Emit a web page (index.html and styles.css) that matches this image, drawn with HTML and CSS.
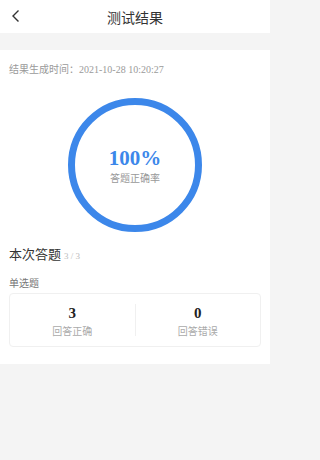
FILE: index.html
```html
<!DOCTYPE html>
<html lang="zh-CN">
<head>
<meta charset="utf-8">
<link rel="stylesheet" href="styles.css">
</head>
<body>
<div class="page">
  <header class="nav">
    <svg class="back" width="10" height="14" viewBox="0 0 10 14"><path d="M7.5 1.5 L2 7 L7.5 12.5" fill="none" stroke="#333" stroke-width="1.4"/></svg>
    <div class="title">测试结果</div>
  </header>
  <div class="band"></div>
  <main class="content">
    <div class="time">结果生成时间：<span class="num">2021-10-28 10:20:27</span></div>
    <div class="ring-wrap">
      <div class="ring">
        <div class="pct">100%</div>
        <div class="pct-label">答题正确率</div>
      </div>
    </div>
    <div class="sec-title">本次答题 <span class="count">3 / 3</span></div>
    <div class="type">单选题</div>
    <div class="card">
      <div class="cell">
        <div class="val">3</div>
        <div class="lab">回答正确</div>
      </div>
      <div class="divider"></div>
      <div class="cell">
        <div class="val">0</div>
        <div class="lab">回答错误</div>
      </div>
    </div>
  </main>
</div>
</body>
</html>
```

FILE: styles.css
```css
html, body {
  margin: 0;
  padding: 0;
  background: #f4f4f4;
}
body {
  font-family: "Noto Sans CJK SC", "Noto Sans", sans-serif;
  color: #333;
}
.page {
  width: 270px;
  min-height: 460px;
  background: #f4f4f4;
}
.nav {
  height: 33px;
  background: #fff;
  display: flex;
  align-items: center;
  justify-content: center;
  position: relative;
}
.back {
  position: absolute;
  left: 11px;
  top: 9px;
}
.title {
  font-size: 14px;
  color: #333;
  line-height: 20px;
}
.band {
  height: 17px;
}
.content {
  background: #fff;
  padding: 13px 9px 17px;
}
.time {
  font-size: 10px;
  line-height: 12px;
  color: #9a9a9a;
}
.num {
  font-family: "Liberation Serif", serif;
}
.ring-wrap {
  display: flex;
  justify-content: center;
  margin-top: 22px;
}
.ring {
  width: 120px;
  height: 120px;
  border: 7px solid #3c87ea;
  border-radius: 50%;
  display: flex;
  flex-direction: column;
  align-items: center;
  justify-content: center;
}
.pct {
  font-family: "Liberation Serif", serif;
  font-weight: bold;
  font-size: 21px;
  line-height: 24px;
  color: #3c87ea;
  margin-top: 1px;
}
.pct-label {
  font-size: 10px;
  line-height: 14px;
  color: #999;
  margin-top: 1px;
}
.sec-title {
  margin-top: 14px;
  font-size: 13px;
  line-height: 16px;
  color: #333;
}
.count {
  font-family: "Liberation Serif", serif;
  font-size: 9px;
  color: #bbb;
}
.type {
  margin-top: 13px;
  font-size: 10px;
  line-height: 12px;
  color: #777;
}
.card {
  margin-top: 4px;
  height: 52px;
  border: 1px solid #f0f0f0;
  border-radius: 4px;
  display: flex;
  align-items: center;
}
.cell {
  flex: 1;
  display: flex;
  flex-direction: column;
  align-items: center;
}
.divider {
  width: 1px;
  height: 32px;
  background: #f0f0f0;
}
.val {
  font-family: "Liberation Serif", serif;
  font-weight: bold;
  font-size: 15px;
  line-height: 18px;
  color: #222;
}
.lab {
  font-size: 10px;
  line-height: 13px;
  color: #aaa;
  margin-top: 2px;
}
```
